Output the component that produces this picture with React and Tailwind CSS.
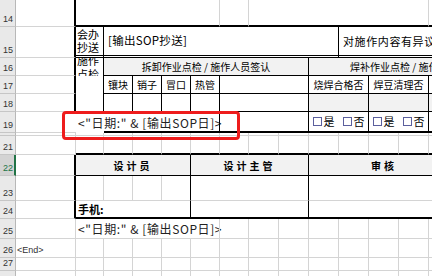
import clsx from "clsx";

const SPAN = {
  1: "col-span-1",
  2: "col-span-2",
  3: "col-span-3",
  4: "col-span-4",
  5: "col-span-5",
  6: "col-span-6",
  7: "col-span-7",
  8: "col-span-8",
};

// right / bottom border styles: g = gridline, k = thin black, K = thick black, d = double, n = none
const RIGHT = {
  g: "border-r border-r-[#d4d4d4]",
  k: "border-r border-r-black",
  K: "border-r-2 border-r-black",
  n: "",
};

const BOTTOM = {
  g: "border-b border-b-[#d4d4d4]",
  k: "border-b border-b-black",
  K: "border-b-2 border-b-black",
  d: "border-b-[3px] border-double border-b-black",
  n: "",
};

const Cell = ({ span = 1, r = "g", b = "g", className, children }) => (
  <div className={clsx(SPAN[span], RIGHT[r], BOTTOM[b], "min-w-0", className)}>{children}</div>
);

const RowHead = ({ label, selected }) => (
  <div
    className={clsx(
      "flex items-end border-b border-b-[#c6c6c6] pb-[2px] pl-[3px] font-[family-name:'Liberation_Sans',sans-serif] text-[9px] leading-none",
      selected
        ? "border-r-2 border-r-[#217346] bg-[#d3d3d3] text-[#217346]"
        : "border-r border-r-[#b8b8b8] bg-[#e9e9e9] text-[#333]"
    )}
  >
    {label}
  </div>
);

// blank gridline cells for columns that hold nothing
const Blank = ({ count }) =>
  Array.from({ length: count }, (_, i) => <Cell key={i} />);

const Check = ({ label }) => (
  <span className="flex items-center gap-[2px]">
    <span className="inline-block h-[9px] w-[9px] border border-[#5b5f9e]" />
    {label}
  </span>
);

const YesNo = () => (
  <div className="flex h-full items-center justify-center gap-[8px] text-[11px]">
    <Check label="是" />
    <Check label="否" />
  </div>
);

const Formula = () => (
  <div className="flex h-full items-center whitespace-nowrap pl-[2px] text-[12px] tracking-[0.6px] text-[#222]">
    {'<"日期:" & [输出SOP日]>'}
  </div>
);

const header = "flex h-full items-center justify-center whitespace-nowrap text-[10px]";

export default function App() {
  return (
    <div className="relative h-screen w-full overflow-hidden bg-white font-[family-name:'Noto_Sans_CJK_SC',sans-serif] text-black">
      <div className="grid w-[459px] grid-cols-[16px_60px_28px_29px_29px_29px_29px_29px_30px_30px_30px_30px_30px_30px_30px] grid-rows-[27px_31px_18px_18px_18px_21px_3px_19px_21px_25px_18px_20px_19px_13px_20px]">
        {/* 14 */}
        <RowHead label="14" />
        <Cell r="K" />
        <Cell span={5} b="K" />
        <Cell b="K" />
        <Cell span={6} b="K" />
        <Cell b="K" />

        {/* 15 */}
        <RowHead label="15" />
        <Cell r="K" />
        <Cell r="k" b="d" className="flex flex-col justify-end pb-[1px] pl-[1px] text-[11px] leading-[13px]">
          <span>会办</span>
          <span>抄送</span>
        </Cell>
        <Cell span={8} r="k" b="d" className="flex items-center pl-[4px] text-[11.5px] tracking-[0.3px]">
          [输出SOP抄送]
        </Cell>
        <Cell span={4} r="n" b="d" className="flex items-center overflow-hidden whitespace-nowrap pl-[4px] text-[11px] tracking-[0.6px]">
          对施作内容有异议请反馈
        </Cell>

        {/* 16 */}
        <RowHead label="16" />
        <Cell r="K" />
        <Cell r="k" b="n" className="flex flex-col justify-center overflow-hidden pl-[1px] text-[11px] leading-[14px]">
          <span className="shrink-0">施作</span>
          <span className="shrink-0">点检</span>
        </Cell>
        <Cell span={7} r="k" b="k" className={clsx(header, "bg-[#f2f2f2]")}>
          拆卸作业点检 / 施作人员签认
        </Cell>
        <Cell span={5} r="n" b="k" className="flex items-center overflow-hidden whitespace-nowrap bg-[#f2f2f2] pl-[41px] text-[10px]">
          焊补作业点检 / 施作人员签认
        </Cell>

        {/* 17 */}
        <RowHead label="17" />
        <Cell r="K" />
        <Cell r="k" b="n" />
        <Cell r="k" b="k" className={header}>镶块</Cell>
        <Cell r="k" b="k" className={header}>销子</Cell>
        <Cell r="k" b="k" className={header}>冒口</Cell>
        <Cell r="k" b="k" className={header}>热管</Cell>
        <Cell span={3} r="k" b="k" />
        <Cell span={2} r="k" b="k" className={header}>烧焊合格否</Cell>
        <Cell span={2} r="k" b="k" className={header}>焊豆清理否</Cell>
        <Cell r="n" b="k" />

        {/* 18 */}
        <RowHead label="18" />
        <Cell r="K" />
        <Cell r="k" b="n" />
        <Cell r="k" b="k" />
        <Cell r="k" b="k" />
        <Cell r="k" b="k" />
        <Cell r="k" b="k" />
        <Cell span={3} r="k" b="k" />
        <Cell span={2} r="k" b="k" className="bg-[#f2f2f2]" />
        <Cell span={2} r="k" b="k" className="bg-[#f2f2f2]" />
        <Cell r="n" b="k" className="bg-[#f2f2f2]" />

        {/* 19 */}
        <RowHead label="19" />
        <Cell r="n" />
        <Cell r="n" b="n">
          <Formula />
        </Cell>
        <Cell r="n" b="K" />
        <Cell r="n" b="K" />
        <Cell r="n" b="K" />
        <Cell r="k" b="K" />
        <Cell span={3} r="k" b="K" />
        <Cell span={2} r="k" b="K">
          <YesNo />
        </Cell>
        <Cell span={2} r="k" b="K">
          <YesNo />
        </Cell>
        <Cell r="n" b="K" />

        {/* 20, hidden */}
        <RowHead label="" />
        <Blank count={14} />

        {/* 21 */}
        <RowHead label="21" />
        <Cell />
        {Array.from({ length: 13 }, (_, i) => (
          <Cell key={i} b="K" />
        ))}

        {/* 22 */}
        <RowHead label="22" selected />
        <Cell r="K" />
        <Cell span={4} r="k" b="k" className={clsx(header, "bg-[#f2f2f2] font-bold tracking-[3px]")}>
          设计员
        </Cell>
        <Cell span={4} r="k" b="k" className={clsx(header, "bg-[#f2f2f2] font-bold tracking-[3px]")}>
          设计主管
        </Cell>
        <Cell span={5} r="n" b="k" className={clsx(header, "bg-[#f2f2f2] font-bold tracking-[3px]")}>
          审核
        </Cell>

        {/* 23 */}
        <RowHead label="23" />
        <Cell r="K" />
        <Cell />
        <Cell />
        <Cell />
        <Cell r="k" />
        <Cell span={4} r="k" />
        <Cell span={5} r="n" />

        {/* 24 */}
        <RowHead label="24" />
        <Cell r="K" />
        <Cell span={4} r="k" b="K" className="flex items-center pl-[2px] text-[11px] font-bold">
          手机:
        </Cell>
        <Cell span={4} r="k" b="K" />
        <Cell span={5} r="n" b="K" />

        {/* 25 */}
        <RowHead label="25" />
        <Cell />
        <Cell r="n">
          <Formula />
        </Cell>
        <Cell r="n" />
        <Cell r="n" />
        <Cell r="n" />
        <Blank count={9} />

        {/* 26 */}
        <RowHead label="26" />
        <Cell className="flex items-end pb-[2px] pl-[1px] font-[family-name:'Liberation_Sans',sans-serif] text-[9px] leading-none text-[#333]">
          {"<End>"}
        </Cell>
        <Blank count={13} />

        {/* 27 */}
        <RowHead label="27" />
        <Blank count={14} />

        {/* 28 */}
        <RowHead label="" />
        <Blank count={14} />
      </div>

      {/* red highlight */}
      <div className="absolute left-[62px] top-[111px] h-[29px] w-[178px] rounded-[4px] border-[3px] border-[#ee1c1c]" />
    </div>
  );
}
